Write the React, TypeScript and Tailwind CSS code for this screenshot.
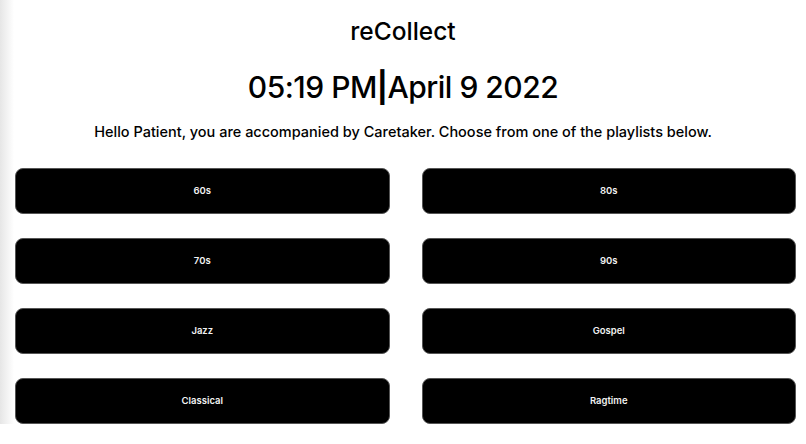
const PLAYLISTS = ['60s', '80s', '70s', '90s', 'Jazz', 'Gospel', 'Classical', 'Ragtime']

export default function App() {
  return (
    <div className="relative min-h-[444px] bg-white text-black font-['Inter','Noto_Sans',sans-serif]">
      {/* faint shadow along the left edge */}
      <div className="absolute left-0 top-0 bottom-[20px] w-[14px] bg-gradient-to-r from-[#e6e6e6] to-transparent pointer-events-none" />

      <header className="flex flex-col items-center pt-[16px]">
        <h1 className="text-[24.5px] leading-[30px] font-medium">reCollect</h1>
        <div className="mt-[23px] text-[30px] leading-[36px] font-medium tracking-[-0.5px]">
          05:19 PM<span className="font-bold">|</span>April 9 2022
        </div>
        <p className="mt-[17px] text-[14.5px] leading-[20px] font-medium">
          Hello Patient, you are accompanied by Caretaker. Choose from one of the playlists below.
        </p>
      </header>

      <div className="grid grid-cols-2 gap-x-[32px] gap-y-[24px] pl-[15px] pr-[10px] mt-[26px]">
        {PLAYLISTS.map(name => (
          <button
            key={name}
            className="h-[46px] rounded-[8px] bg-black border border-[#555] text-[#f2f2f2] text-[9.5px] font-semibold"
          >
            {name}
          </button>
        ))}
      </div>
    </div>
  )
}
